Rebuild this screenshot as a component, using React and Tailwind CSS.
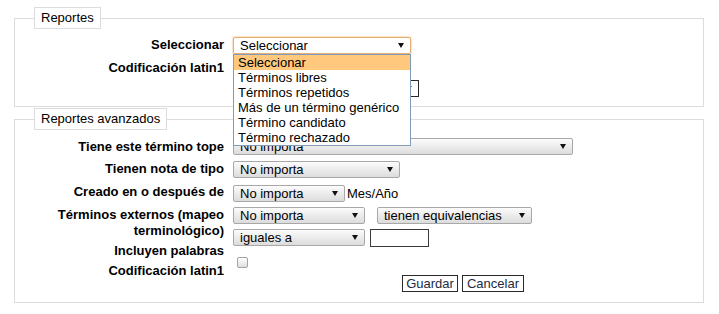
import clsx from 'clsx';

const options = [
  'Seleccionar',
  'Términos libres',
  'Términos repetidos',
  'Más de un término genérico',
  'Término candidato',
  'Término rechazado',
];

const Arrow = () => (
  <svg width="6" height="5" viewBox="0 0 6 5" className="ml-auto shrink-0">
    <path d="M0 0H6L3 5Z" fill="#111" />
  </svg>
);

const SelectBox = ({ className, children, focused }) => (
  <div
    className={clsx(
      'flex h-[17px] shrink-0 items-center rounded-[2px] border pl-[6px] pr-[6px] text-[13px] leading-[15px] text-black',
      focused
        ? 'border-[#e3ad78] bg-white shadow-[0_0_1px_1px_#fbe3c6]'
        : 'border-[#a8a8a8] bg-gradient-to-b from-[#fcfcfc] to-[#dcdcdc]',
      className
    )}
  >
    <span className="whitespace-nowrap">{children}</span>
    <Arrow />
  </div>
);

const Checkbox = ({ className }) => (
  <div
    className={clsx(
      'h-[11px] w-[11px] rounded-[2px] border border-[#a3a3a3] bg-gradient-to-b from-white to-[#dedede]',
      className
    )}
  />
);

const Button = ({ className, children }) => (
  <button
    type="button"
    className={clsx(
      'flex h-[17px] items-center justify-center border border-[#2a2a2a] bg-white text-[13px] leading-[15px] text-[#1c2b42]',
      className
    )}
  >
    {children}
  </button>
);

const Legend = ({ children }) => (
  <legend className="ml-[19px] border border-[#dcdcdc] px-[6px] text-[13px] leading-[20px] text-black">
    {children}
  </legend>
);

const Label = ({ className, children }) => (
  <div className={clsx('text-right text-[13px] font-bold leading-[16px] text-black', className)}>{children}</div>
);

export default function App() {
  return (
    <div className="min-h-[314px] bg-white pl-[14px] pt-[7px] font-['Liberation_Sans',Arial,sans-serif]">
      <fieldset className="w-[690px] border border-[#dcdcdc] pb-[9px] pt-[8px]">
        <Legend>Reportes</Legend>
        <div className="flex">
          <div className="flex w-[209px] flex-col">
            <Label>Seleccionar</Label>
            <Label className="mt-[7px]">Codificación latin1</Label>
          </div>
          <div className="ml-[9px] flex flex-col items-start">
            <div className="relative">
              <SelectBox focused className="w-[178px]">
                Seleccionar
              </SelectBox>
              <ul className="absolute left-0 top-full z-10 w-[178px] border border-[#7f9db9] bg-white text-[13px] leading-[15px] text-black">
                {options.map((o, i) => (
                  <li key={o} className={clsx('h-[15px] whitespace-nowrap pl-[4px]', i === 0 && 'bg-[#ffc87d]')}>
                    {o}
                  </li>
                ))}
              </ul>
            </div>
            <Checkbox className="ml-[4px] mt-[9px]" />
            <Button className="ml-[124px] mt-[6px] w-[62px]">Guardar</Button>
          </div>
        </div>
      </fieldset>

      <fieldset className="mt-[1px] w-[690px] border border-[#dcdcdc] pb-[10px] pt-[8px]">
        <Legend>Reportes avanzados</Legend>
        <div className="flex">
          <div className="flex w-[209px] flex-col">
            <Label className="mt-[1px]">Tiene este término tope</Label>
            <Label className="mt-[6px]">Tienen nota de tipo</Label>
            <Label className="mt-[7px]">Creado en o después de</Label>
            <Label className="mt-[7px] pl-[40px]">Términos externos (mapeo terminológico)</Label>
            <Label className="mt-[4px]">Incluyen palabras</Label>
            <Label className="mt-[4px]">Codificación latin1</Label>
          </div>
          <div className="ml-[9px] flex flex-col items-start">
            <SelectBox className="w-[340px]">No importa</SelectBox>
            <SelectBox className="mt-[6px] w-[167px]">No importa</SelectBox>
            <div className="mt-[7px] flex items-center">
              <SelectBox className="w-[112px]">No importa</SelectBox>
              <span className="ml-[2px] text-[13px] leading-[15px] text-black">Mes/Año</span>
            </div>
            <div className="mt-[5px] flex items-center">
              <SelectBox className="w-[132px]">No importa</SelectBox>
              <SelectBox className="ml-[12px] w-[155px]">tienen equivalencias</SelectBox>
            </div>
            <div className="mt-[5px] flex items-start">
              <SelectBox className="w-[132px]">iguales a</SelectBox>
              <input
                type="text"
                className="ml-[5px] h-[18px] w-[59px] border border-[#3a3a3a] bg-white text-[13px] outline-none"
              />
            </div>
            <Checkbox className="ml-[4px] mt-[10px]" />
            <div className="ml-[169px] mt-[7px] flex gap-[4px]">
              <Button className="w-[56px]">Guardar</Button>
              <Button className="w-[62px]">Cancelar</Button>
            </div>
          </div>
        </div>
      </fieldset>
    </div>
  );
}
